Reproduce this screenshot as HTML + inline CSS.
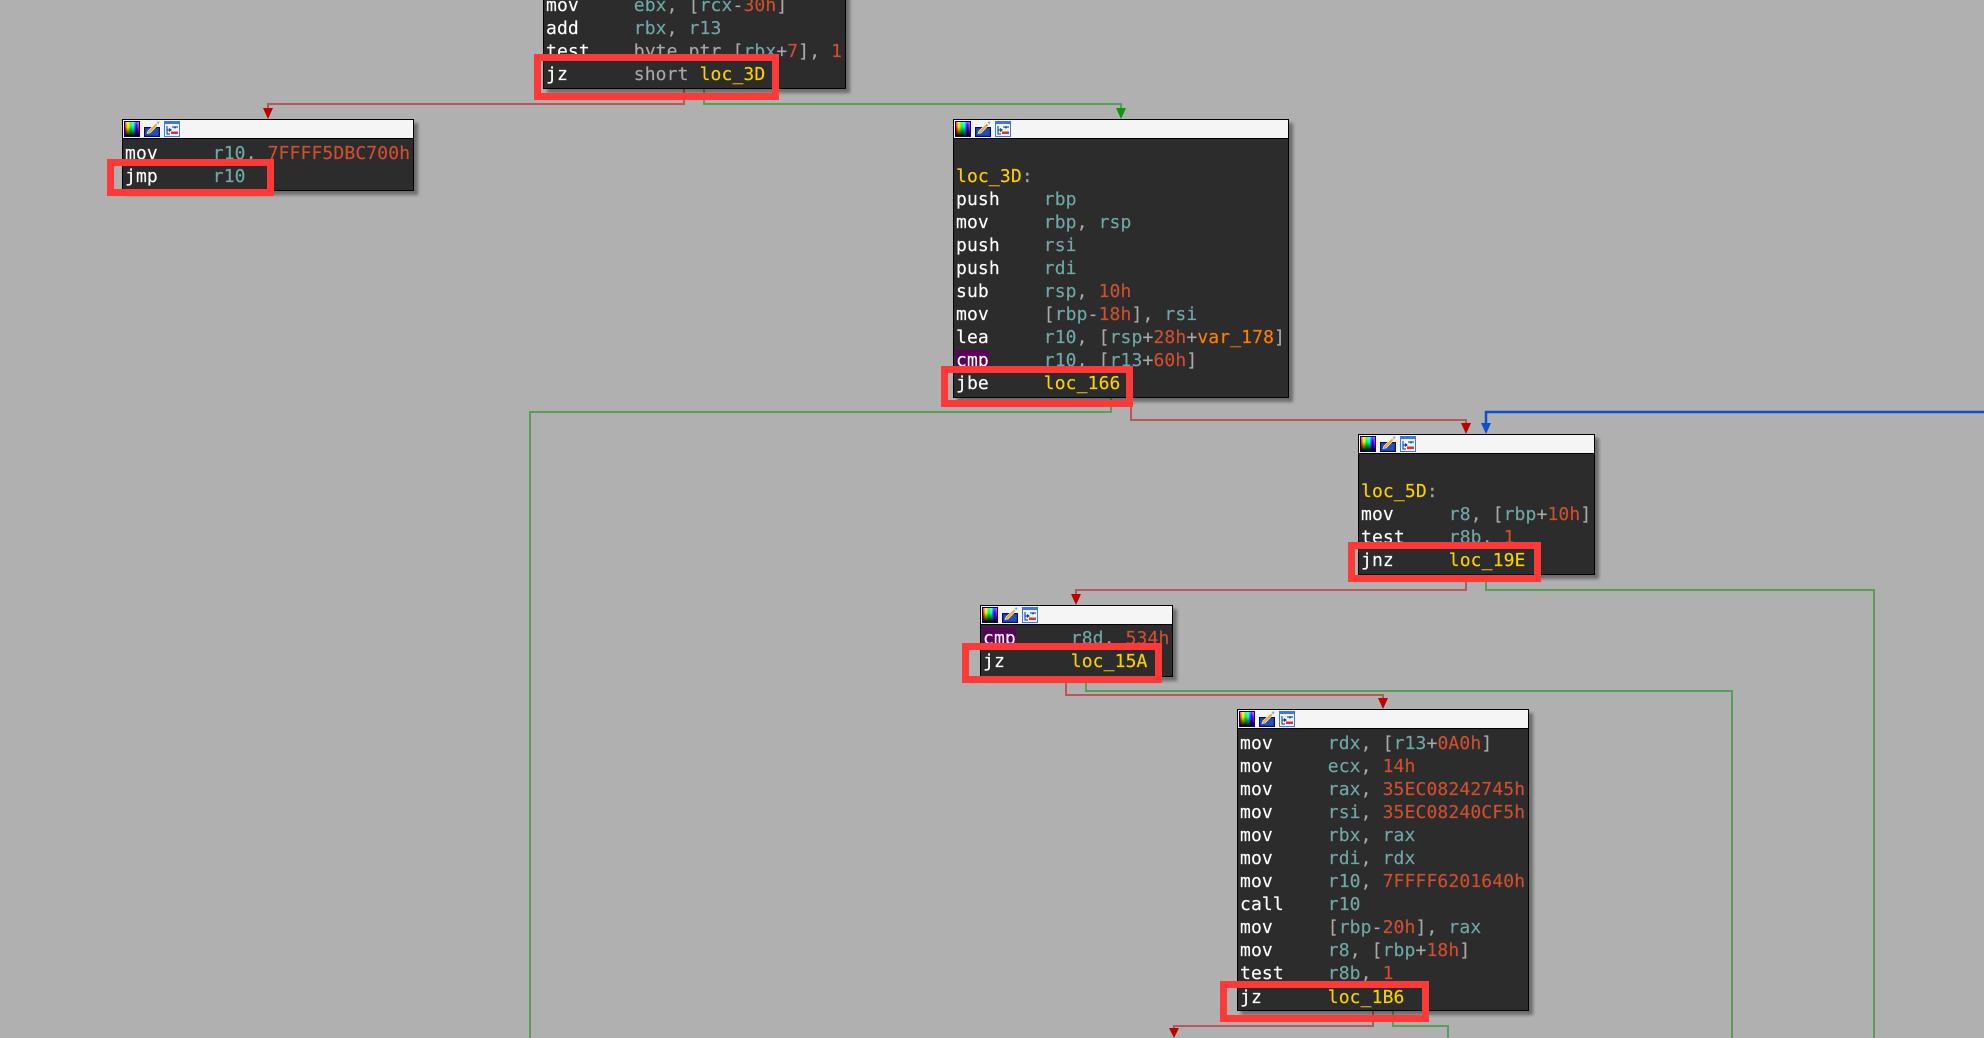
<!DOCTYPE html>
<html><head><meta charset="utf-8"><title>Graph view</title>
<style>
html,body{margin:0;padding:0;background:#b0b0b0;width:1984px;height:1038px;overflow:hidden}
#w{position:relative;width:1984px;height:1038px;overflow:hidden;background:#b0b0b0}
.b{position:absolute;box-sizing:border-box;background:#2c2c2c;border:1px solid #000;box-shadow:4px 4px 3px rgba(0,0,0,.38)}
.h{position:absolute;left:0;right:0;top:0;height:18px;background:#f5f5f5;border-bottom:1px solid #000}
.h i,.h svg{position:absolute;top:1px;width:16px;height:16px;display:block}
.h i{left:1px;box-sizing:border-box;border:1px solid #000070;background:linear-gradient(to bottom,rgba(255,255,255,.35),transparent 35%,#000 100%),linear-gradient(to right,#f00,#ff0,#0f0,#0ff,#00f,#f0f)}
.h .p{left:21px}.h .n{left:41px}
pre{position:absolute;margin:0;font:18px/23.09px "DejaVu Sans Mono","Liberation Mono",monospace;letter-spacing:.13px;color:#fff;-webkit-text-stroke:.15px currentColor}
.o{color:#6fa8a8}.d{color:#a8a8a8}.r{color:#cf4f2f}.y{color:#ffd000}.v{color:#ff8000}.c{background:#5b005b}
.x{position:absolute;box-sizing:border-box;border:7px solid #ff3838}
svg.g{position:absolute;left:0;top:0}
</style></head><body><div id="w">
<svg width="0" height="0" style="position:absolute"><defs>
<symbol id="p" viewBox="0 0 16 16"><rect x=".5" y="6.5" width="15" height="9" fill="#1c3f9f" stroke="#00106a"/><rect x="2" y="8" width="12" height="6" fill="#2050b8"/><path d="M3 12.5L4 10L12 2L14 4L6 12Z" fill="#f5a623" stroke="#fff" stroke-width=".6"/><path d="M12.5 1.5L14.5 3.5L15.5 1L14 .3Z" fill="#7ab8e8"/></symbol>
<symbol id="n" viewBox="0 0 16 16"><rect x=".5" y=".5" width="15" height="15" fill="#eef4ff" stroke="#3a7ae0"/><rect x="1" y="1" width="14" height="2" fill="#3a7ae0"/><path d="M3 5V13H6M3 9H7M5 7.5L7 9L5 10.5M10 5.5L11 7L12 5.5" fill="none" stroke="#10307a" stroke-width="1"/><rect x="7" y="10.500" width="7" height="2.500" fill="#e03030"/><path d="M8 6H14" stroke="#10307a"/></symbol>
</defs></svg>

<svg class="g" width="1984" height="1038" fill="none" stroke-width="2">
<g stroke="#b85858">
<path d="M684 88V104H268V110"/>
<path d="M1131 398V420H1466V424"/>
<path d="M1466 574V590H1076V596"/>
<path d="M1066 677V695H1383V700"/>
<path d="M1373 1011V1026H1174V1030"/>
</g>
<g stroke="#55a055">
<path d="M704 88V104H1121V110"/>
<path d="M1111 398V412H530V1038"/>
<path d="M1486 574V590H1874V1038"/>
<path d="M1086 677V691H1732V1038"/>
<path d="M1393 1011V1026H1448V1038"/>
</g>
<path d="M1984 412H1486V424" stroke="#0f50d0" stroke-width="2.500"/>
<g stroke="none" fill="#c00000">
<path d="M263 108H273L268 119Z"/>
<path d="M1461 423H1471L1466 434Z"/>
<path d="M1071 594H1081L1076 605Z"/>
<path d="M1378 698H1388L1383 709Z"/>
<path d="M1169 1028H1179L1174 1038Z"/>
</g>
<path d="M1116 108H1126L1121 119Z" fill="#079b07"/>
<path d="M1481 423H1491L1486 434Z" fill="#0b50cf"/>
</svg>

<!-- A -->
<div class="b" style="left:543px;top:-20px;width:303px;height:109px"></div>
<pre style="left:546px;top:-6.500px">mov     <span class="o">ebx</span><span class="d">, [</span><span class="o">rcx</span><span class="d">-</span><span class="r">30h</span><span class="d">]</span>
add     <span class="o">rbx</span><span class="d">, </span><span class="o">r13</span>
test    <span class="d">byte ptr [</span><span class="o">rbx</span><span class="d">+</span><span class="r">7</span><span class="d">], </span><span class="r">1</span>
jz      <span class="d">short </span><span class="y">loc_3D</span></pre>
<div class="x" style="left:534px;top:54px;width:245px;height:46px"></div>

<!-- B -->
<div class="b" style="left:122px;top:119px;width:292px;height:72px"><div class="h"><i></i><svg class="p"><use href="#p"/></svg><svg class="n"><use href="#n"/></svg></div></div>
<pre style="left:125px;top:141.500px">mov     <span class="o">r10</span><span class="d">, </span><span class="r">7FFFF5DBC700h</span>
jmp     <span class="o">r10</span></pre>
<div class="x" style="left:107px;top:159px;width:167px;height:37px"></div>

<!-- C -->
<div class="b" style="left:953px;top:119px;width:336px;height:279px"><div class="h"><i></i><svg class="p"><use href="#p"/></svg><svg class="n"><use href="#n"/></svg></div></div>
<pre style="left:956px;top:141.500px">

<span class="y">loc_3D</span><span class="d">:</span>
push    <span class="o">rbp</span>
mov     <span class="o">rbp</span><span class="d">, </span><span class="o">rsp</span>
push    <span class="o">rsi</span>
push    <span class="o">rdi</span>
sub     <span class="o">rsp</span><span class="d">, </span><span class="r">10h</span>
mov     <span class="d">[</span><span class="o">rbp</span><span class="d">-</span><span class="r">18h</span><span class="d">], </span><span class="o">rsi</span>
lea     <span class="o">r10</span><span class="d">, [</span><span class="o">rsp</span><span class="d">+</span><span class="r">28h</span><span class="d">+</span><span class="v">var_178</span><span class="d">]</span>
<span class="c">cmp</span>     <span class="o">r10</span><span class="d">, [</span><span class="o">r13</span><span class="d">+</span><span class="r">60h</span><span class="d">]</span>
jbe     <span class="y">loc_166</span></pre>
<div class="x" style="left:941px;top:366px;width:192px;height:41px"></div>

<!-- D -->
<div class="b" style="left:1358px;top:434px;width:237px;height:141px"><div class="h"><i></i><svg class="p"><use href="#p"/></svg><svg class="n"><use href="#n"/></svg></div></div>
<pre style="left:1361px;top:456.500px">

<span class="y">loc_5D</span><span class="d">:</span>
mov     <span class="o">r8</span><span class="d">, [</span><span class="o">rbp</span><span class="d">+</span><span class="r">10h</span><span class="d">]</span>
test    <span class="o">r8b</span><span class="d">, </span><span class="r">1</span>
jnz     <span class="y">loc_19E</span></pre>
<div class="x" style="left:1348px;top:542px;width:193px;height:40px"></div>

<!-- E -->
<div class="b" style="left:980px;top:605px;width:193px;height:72px"><div class="h"><i></i><svg class="p"><use href="#p"/></svg><svg class="n"><use href="#n"/></svg></div></div>
<pre style="left:983px;top:627px"><span class="c">cmp</span>     <span class="o">r8d</span><span class="d">, </span><span class="r">534h</span>
jz      <span class="y">loc_15A</span></pre>
<div class="x" style="left:962px;top:643px;width:200px;height:40px"></div>

<!-- F -->
<div class="b" style="left:1237px;top:709px;width:292px;height:302px"><div class="h"><i></i><svg class="p"><use href="#p"/></svg><svg class="n"><use href="#n"/></svg></div></div>
<pre style="left:1240px;top:731.500px">mov     <span class="o">rdx</span><span class="d">, [</span><span class="o">r13</span><span class="d">+</span><span class="r">0A0h</span><span class="d">]</span>
mov     <span class="o">ecx</span><span class="d">, </span><span class="r">14h</span>
mov     <span class="o">rax</span><span class="d">, </span><span class="r">35EC08242745h</span>
mov     <span class="o">rsi</span><span class="d">, </span><span class="r">35EC08240CF5h</span>
mov     <span class="o">rbx</span><span class="d">, </span><span class="o">rax</span>
mov     <span class="o">rdi</span><span class="d">, </span><span class="o">rdx</span>
mov     <span class="o">r10</span><span class="d">, </span><span class="r">7FFFF6201640h</span>
call    <span class="o">r10</span>
mov     <span class="d">[</span><span class="o">rbp</span><span class="d">-</span><span class="r">20h</span><span class="d">], </span><span class="o">rax</span>
mov     <span class="o">r8</span><span class="d">, [</span><span class="o">rbp</span><span class="d">+</span><span class="r">18h</span><span class="d">]</span>
test    <span class="o">r8b</span><span class="d">, </span><span class="r">1</span>
jz      <span class="y">loc_1B6</span></pre>
<div class="x" style="left:1220px;top:981px;width:209px;height:41px"></div>
</div></body></html>
